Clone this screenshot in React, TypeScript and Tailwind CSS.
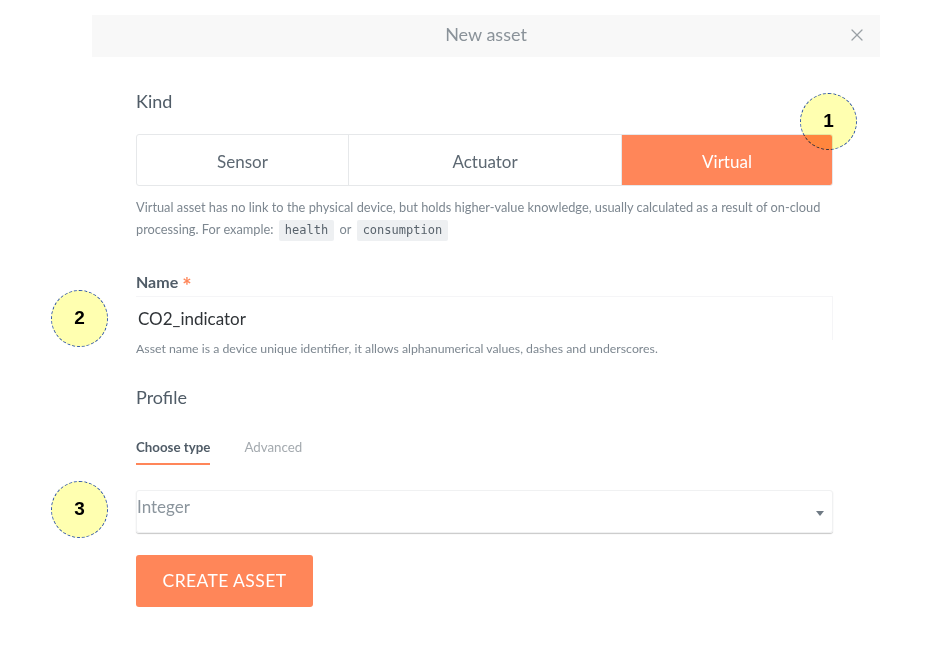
import { X } from 'lucide-react';

const kinds = [
  { label: 'Sensor', width: 'w-[211px]' },
  { label: 'Actuator', width: 'w-[273px]' },
  { label: 'Virtual', width: 'flex-1' },
];

function Callout({ n, className }: { n: number; className: string }) {
  return (
    <div
      className={`absolute w-[57px] h-[57px] rounded-full border border-dashed border-[#2f55a4] bg-[#ffffb0] mix-blend-multiply flex items-center justify-center text-[19px] font-bold text-black ${className}`}
      style={{ fontFamily: '"Liberation Sans", Arial, sans-serif' }}
    >
      {n}
    </div>
  );
}

const mono = { fontFamily: '"DejaVu Sans Mono", monospace' };

export default function App() {
  const selected = 'Virtual';

  return (
    <div
      className="relative w-[932px] h-[646px] bg-white overflow-hidden"
      style={{ fontFamily: 'Lato, "Open Sans", sans-serif' }}
    >
      {/* Header */}
      <div className="relative ml-[92px] mt-[15px] w-[788px] h-[42px] bg-[#f8f8f8] flex items-center justify-center pb-[3px]">
        <span className="text-[18px] text-[#8a9299]">New asset</span>
        <X className="absolute right-[13px] top-[10px] h-[20px] w-[20px] text-[#9aa0a5]" strokeWidth={1.5} />
      </div>

      <div className="ml-[136px] w-[697px]">
        {/* Kind */}
        <div className="mt-[32px] text-[18px] leading-[24px] text-[#505c67]">Kind</div>
        <div className="mt-[21px] flex h-[52px] rounded-[3px] border border-[#e6e8ea] overflow-hidden">
          {kinds.map((k, i) => (
            <div
              key={k.label}
              className={`${k.width} flex items-center justify-center pt-[3px] text-[17px] ${
                k.label === selected ? 'bg-[#ff8659] text-white' : 'text-[#5d6872]'
              } ${i > 0 ? 'border-l border-[#e6e8ea]' : ''}`}
            >
              {k.label}
            </div>
          ))}
        </div>
        <div className="mt-[10px] text-[12.8px] leading-[22px] text-[#7d8790]">
          Virtual asset has no link to the physical device, but holds higher-value knowledge, usually calculated as a result of on-cloud
          <br />
          processing. For example:{' '}
          <code className="inline-block ml-[2px] px-[6px] leading-[21px] rounded-[2px] bg-[#eef0f2] text-[12px] text-[#59636c]" style={mono}>
            health
          </code>{' '}
          <span className="mx-[2px]">or</span>{' '}
          <code className="inline-block px-[6px] leading-[21px] rounded-[2px] bg-[#eef0f2] text-[12px] text-[#59636c]" style={mono}>
            consumption
          </code>
        </div>

        {/* Name */}
        <div className="mt-[30px] h-[22px] flex items-center gap-[4px] text-[16px] leading-[22px] font-bold text-[#505c67]">
          <span>Name</span>
          <span className="relative top-[4px] text-[22px] leading-none text-[#ff8659]">*</span>
        </div>
        <div className="mt-[3px] h-[44px] flex items-center pl-[2px] border-t border-r border-[#f5f5f7]">
          <span className="text-[17px] text-[#2f3337]">CO2_indicator</span>
        </div>
        <div className="mt-[1px] text-[12.3px] leading-[16px] text-[#7d8790]">
          Asset name is a device unique identifier, it allows alphanumerical values, dashes and underscores.
        </div>

        {/* Profile */}
        <div className="mt-[28px] text-[18px] leading-[24px] text-[#505c67]">Profile</div>
        <div className="mt-[29px] flex gap-[34px] text-[13.3px] leading-[18px]">
          <div className="pb-[7px] border-b-2 border-[#ff8659] font-bold text-[#505c67]">Choose type</div>
          <div className="text-[#a4aaaf]">Advanced</div>
        </div>
        <div className="mt-[25px] h-[43px] rounded-[3px] border border-[#f0f1f2] shadow-[0_1px_1px_rgba(0,0,0,0.22)] flex items-start justify-between pr-[8px]">
          <span className="mt-[4px] text-[17px] leading-[24px] text-[#8b959d]">Integer</span>
          <span className="mt-[20px] w-0 h-0 border-l-[4px] border-r-[4px] border-t-[5px] border-l-transparent border-r-transparent border-t-[#6f7a84]" />
        </div>

        <button className="mt-[22px] w-[177px] h-[52px] rounded-[3px] bg-[#ff8659] text-white text-[17.5px] tracking-[0.4px]">
          CREATE ASSET
        </button>
      </div>

      <Callout n={1} className="left-[800px] top-[93px]" />
      <Callout n={2} className="left-[51px] top-[290px]" />
      <Callout n={3} className="left-[51px] top-[481px]" />
    </div>
  );
}
